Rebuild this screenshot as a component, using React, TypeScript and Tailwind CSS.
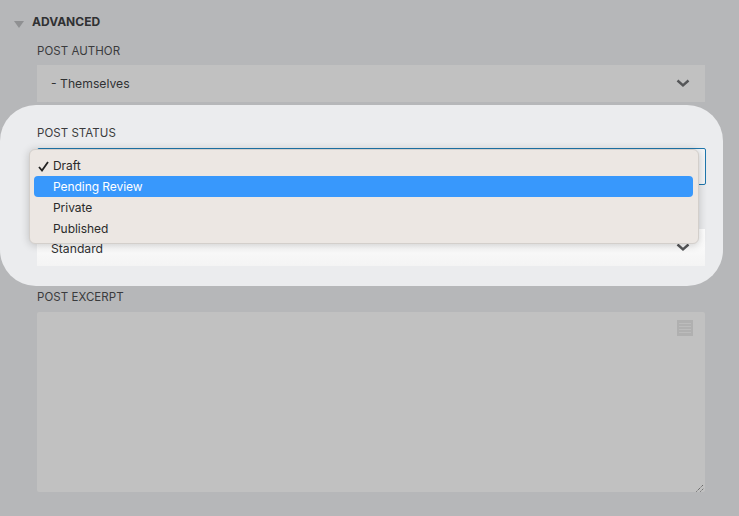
import React from "react";

function Chevron() {
  return (
    <svg width="14" height="9" viewBox="0 0 14 9" className="shrink-0">
      <path d="M1.5 1.5 7 6.5 12.5 1.5" fill="none" stroke="#555658" strokeWidth="2.4" />
    </svg>
  );
}

function Label({ children }: { children: React.ReactNode }) {
  return <div className="text-[11.5px] leading-[14px] tracking-[0.05px] text-[#3a3b3d]">{children}</div>;
}

export default function App() {
  return (
    <div
      className="relative w-[739px] h-[516px] overflow-hidden bg-[#b6b7b9] pl-[37px] pr-[34px]"
      style={{ fontFamily: 'Inter, "Liberation Sans", sans-serif' }}
    >
      <div className="flex items-center h-[14px] mt-[14px] -ml-[23px] gap-[8px] translate-y-[1px]">
        <svg width="10" height="7" viewBox="0 0 10 7" className="mt-[4px]">
          <path d="M0 0H10L5 7Z" fill="#8f9092" />
        </svg>
        <span className="text-[12px] font-bold text-[#303133]">ADVANCED</span>
      </div>

      <div className="mt-[16px]"><Label>POST AUTHOR</Label></div>
      <div className="mt-[7px] h-[37px] bg-[#c1c1c1] flex items-center justify-between pl-[14px] pr-[15px]">
        <span className="text-[12.2px] pt-[1px] text-[#303133]">- Themselves</span>
        <Chevron />
      </div>

      <div className="relative mt-[3px] -ml-[37px] w-[723px] h-[181px] rounded-[36px] bg-[#ebecee] pl-[37px] pr-[17px] pt-[21px]">
        <Label>POST STATUS</Label>
        <div className="mt-[8px] h-[37px] rounded-[2px] border border-[#1f77ad] bg-[#f4f5f6]" />
        <div className="mt-[44px] mr-[1px] h-[37px] bg-gradient-to-b from-[#ffffff] to-[#f4f4f4] flex items-center justify-between pl-[14px] pr-[15px]">
          <span className="text-[12.2px] pt-[3px] text-[#303133]">Standard</span>
          <Chevron />
        </div>

        <div className="absolute left-[29px] top-[44px] w-[670px] h-[95px] rounded-[6px] bg-[#ece7e3] border border-[#d3cfcb] shadow-[0_1px_8px_rgba(0,0,0,0.2)] pl-[4px] pr-[5px] pt-[5px] text-[12px] tracking-[-0.05px] text-[#2a2a2a]">
          {["Draft", "Pending Review", "Private", "Published"].map((item, i) => (
            <div
              key={item}
              className={
                i === 1
                  ? "relative h-[21px] leading-[21px] pl-[19px] rounded-[4px] bg-[#3898fc] text-white"
                  : "relative h-[21px] leading-[21px] pl-[19px]"
              }
            >
              {i === 0 && (
                <svg width="11" height="11" viewBox="0 0 11 11" className="absolute left-[4px] top-[6px]">
                  <path d="M1 6 4 9.5 10 1" fill="none" stroke="#222" strokeWidth="1.8" />
                </svg>
              )}
              {item}
            </div>
          ))}
        </div>
      </div>

      <div className="mt-[4px]"><Label>POST EXCERPT</Label></div>
      <div className="relative mt-[8px] h-[180px] rounded-[2px] bg-[#c1c1c1]">
        <svg width="16" height="16" viewBox="0 0 16 16" className="absolute right-[12px] top-[8px]">
          <rect width="16" height="16" fill="#b0b0b0" />
          <path d="M2 3.5H14M2 6.5H14M2 9.5H14M2 12.5H14" stroke="#bcbcbc" strokeWidth="1" />
        </svg>
        <svg width="8" height="8" viewBox="0 0 8 8" className="absolute right-[1px] bottom-[0px]">
          <path d="M0.5 7.5 7.5 0.5M4.5 7.5 7.5 4.5" stroke="#444" strokeWidth="1" strokeDasharray="1 1" fill="none" />
        </svg>
      </div>
    </div>
  );
}
